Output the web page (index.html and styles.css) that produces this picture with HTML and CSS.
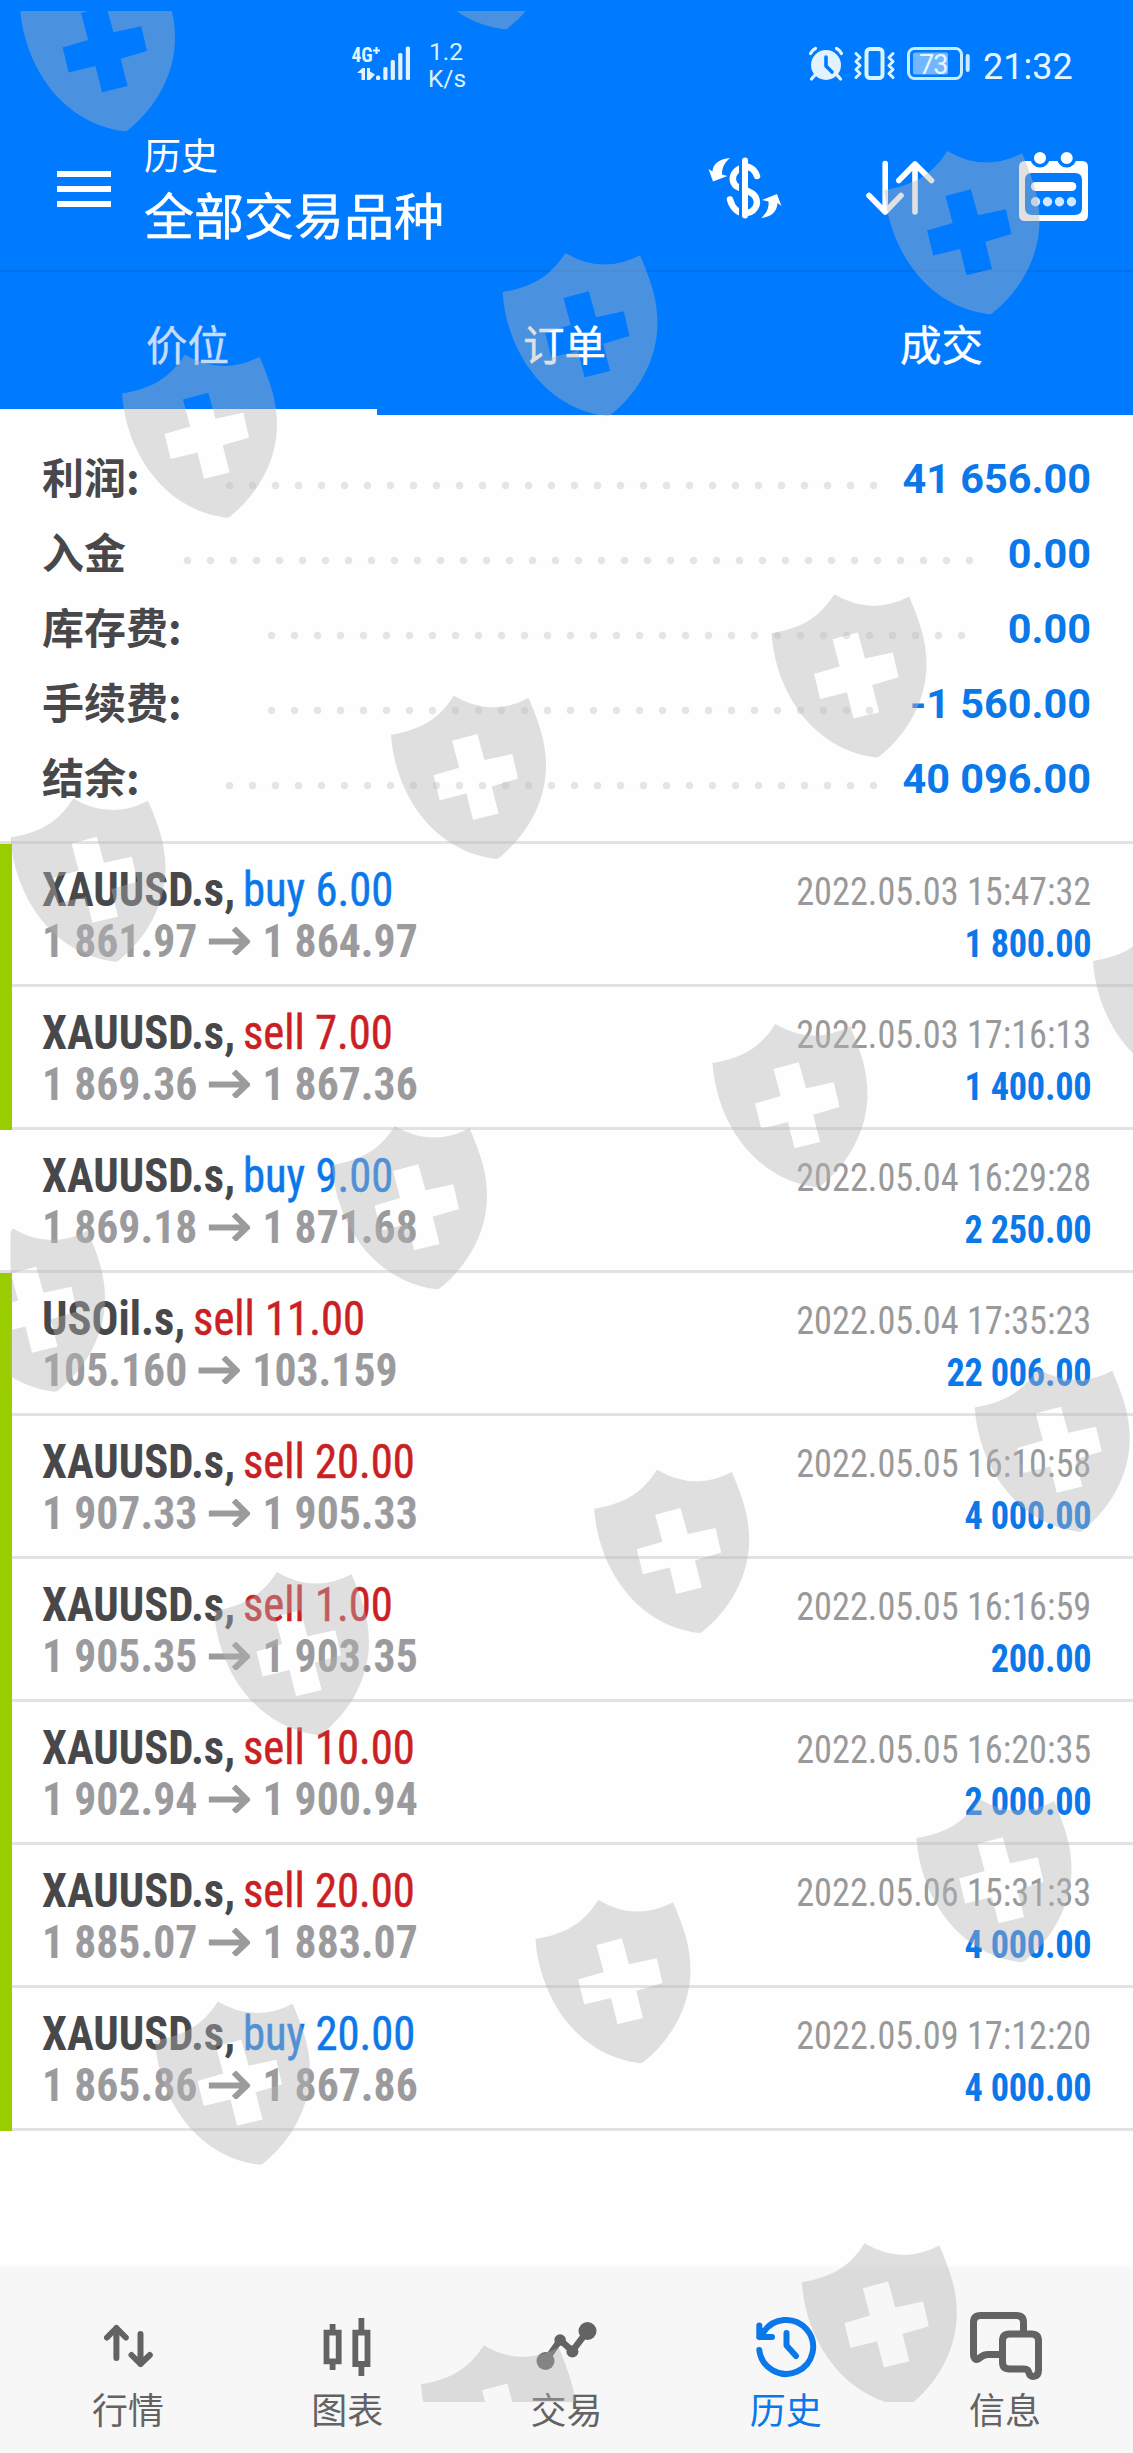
FILE: index.html
```
<!DOCTYPE html>
<html lang="zh-CN">
<head>
<meta charset="utf-8">
<title>历史</title>
<link rel="stylesheet" href="styles.css">
</head>
<body>
<svg class="defs" width="0" height="0">
  <symbol id="arrow" viewBox="0 0 42 28" preserveAspectRatio="none"><path d="M0 14.500H38M25.500 1.500L38.500 14.500L25.500 27" fill="none" stroke="currentColor" stroke-width="6"/></symbol>
</svg>
<header class="header">
  <div class="status">
    <svg class="signal" viewBox="350 45 62 37">
      <g fill="#e2f3ff">
        <text x="351.500" y="62" class="net">4G</text><path d="M373 50.500h7M376.500 47v7" stroke="#e2f3ff" stroke-width="2.200"/>
        <path d="M357 73l5.500-5h2.500v12h-3.500v-7zM367 68h3v3.500l5 3l-5 5.500h-3z"/>
        <rect x="376" y="75.500" width="4.200" height="4.500" rx="1.500"/><rect x="383.300" y="67" width="4.200" height="13" rx="1.500"/><rect x="390.700" y="60" width="4.200" height="20" rx="1.500"/><rect x="398.200" y="53" width="4.200" height="27" rx="1.500"/><rect x="405.800" y="46.500" width="4.200" height="33.500" rx="1.500"/>
      </g>
    </svg>
    <div class="rate"><span>1.2</span><span>K/s</span></div>
    <svg class="sys" viewBox="806 45 166 37">
      <circle cx="826" cy="65" r="15" fill="#e2f3ff"/>
      <path d="M826 57v9l6 6" fill="none" stroke="#007aff" stroke-width="3.600" stroke-linecap="round" stroke-linejoin="round"/>
      <path d="M810.500 53.500Q812 50 815.500 48.500M836.500 48.500Q840 50 841.500 53.500M815 75l-3.500 4M837 75l3.500 4" fill="none" stroke="#e2f3ff" stroke-width="3.200" stroke-linecap="round"/>
      <rect x="866.500" y="49" width="16" height="29" rx="3.500" fill="none" stroke="#d8f4ff" stroke-width="4"/>
      <path d="M856 53.500l4 4-4 4 4 4-4 4 4 4-4 4M893 53.500l-4 4 4 4-4 4 4 4-4 4 4 4" fill="none" stroke="#d8f4ff" stroke-width="3" stroke-linecap="round" stroke-linejoin="round"/>
      <rect x="908.500" y="48.500" width="53" height="30" rx="6" fill="none" stroke="#c4edff" stroke-width="3"/>
      <rect x="913" y="52.500" width="35" height="22" rx="2" fill="#72b6ff"/>
      <rect x="965.700" y="54" width="4" height="18" rx="2" fill="#c4edff"/>
      <text x="919" y="73.500" class="level">73</text>
    </svg>
    <span class="clock">21:32</span>
  </div>
  <div class="titlebar">
    <svg class="menu" viewBox="0 0 54 36"><path d="M0 3h54M0 18h54M0 33h54" stroke="#fff" stroke-width="6"/></svg>
    <div class="titles"><span class="sub">历史</span><span class="main">全部交易品种</span></div>
    <svg class="actions" viewBox="700 145 400 85">
      <path d="M757 176C754 167 746 165 741 168C732 172 731 180 735 185C738 189 752 190 755.500 197C759.500 205 754 213 745 213C737 213 732 207 730 199.500" fill="none" stroke="#fff" stroke-width="6.500" stroke-linecap="round"/>
      <path d="M741 160v56" stroke="#007aff" stroke-width="4"/>
      <path d="M745 160.500v55" stroke="#fff" stroke-width="6" stroke-linecap="round"/>
      <path d="M730 158C720 159 713 163 712.500 171.500L708.500 169L713 181.500L727.500 176L722 174.500C722 168 724 163 730 158z" fill="#fff"/>
      <path d="M761 218C771 217 777 212 777.500 203L781.500 206L777 194L762 200L768.500 201.500C769 208 767 213 761 218z" fill="#fff"/>
      <path d="M885.200 163.500V212M869 195.500L885.200 212L901 195.500M915 212V164M898.800 180.500L915 164L931.500 180.500" fill="none" stroke="#fff" stroke-width="5.600" stroke-linecap="round" stroke-linejoin="round"/>
      <path fill-rule="evenodd" fill="#fff" d="M1025 161H1082q6 0 6 6V215q0 6-6 6H1025q-6 0-6-6V167q0-6 6-6zM1032 173q-7 0-7 7V208q0 7 7 7H1075q7 0 7-7V180q0-7-7-7z"/>
      <circle cx="1040" cy="158" r="7.800" fill="#fff" stroke="#007aff" stroke-width="3.500"/>
      <circle cx="1066.700" cy="158" r="7.800" fill="#fff" stroke="#007aff" stroke-width="3.500"/>
      <rect x="1031" y="182" width="45.300" height="9" rx="4.500" fill="#fff"/>
      <g fill="#fff" fill-opacity=".82"><circle cx="1035.500" cy="201.700" r="4.700"/><circle cx="1047.500" cy="201.700" r="4.700"/><circle cx="1059.500" cy="201.700" r="4.700"/><circle cx="1071.500" cy="201.700" r="4.700"/></g>
    </svg>
  </div>
  <nav class="tabs"><span class="tab on">价位</span><span class="tab">订单</span><span class="tab">成交</span></nav>
</header>
<section class="summary">
  <div class="sum"><span class="label">利润:</span><i class="dots d29"></i><b>41 656.00</b></div>
  <div class="sum"><span class="label short">入金</span><i class="dots d35"></i><b>0.00</b></div>
  <div class="sum"><span class="label long">库存费:</span><i class="dots d31"></i><b>0.00</b></div>
  <div class="sum"><span class="label long">手续费:</span><i class="dots d27"></i><b>-1 560.00</b></div>
  <div class="sum"><span class="label">结余:</span><i class="dots d29"></i><b>40 096.00</b></div>
</section>
<main class="deals">
  <article class="deal mark"><div class="body"><div class="l"><p class="sym"><b>XAUUSD.s,</b><span class="buy">buy 6.00</span></p><p class="px">1 861.97<svg><use href="#arrow"/></svg>1 864.97</p></div><div class="r"><p class="date">2022.05.03 15:47:32</p><p class="val">1 800.00</p></div></div></article>
  <article class="deal mark"><div class="body"><div class="l"><p class="sym"><b>XAUUSD.s,</b><span class="sell">sell 7.00</span></p><p class="px">1 869.36<svg><use href="#arrow"/></svg>1 867.36</p></div><div class="r"><p class="date">2022.05.03 17:16:13</p><p class="val">1 400.00</p></div></div></article>
  <article class="deal"><div class="body"><div class="l"><p class="sym"><b>XAUUSD.s,</b><span class="buy">buy 9.00</span></p><p class="px">1 869.18<svg><use href="#arrow"/></svg>1 871.68</p></div><div class="r"><p class="date">2022.05.04 16:29:28</p><p class="val">2 250.00</p></div></div></article>
  <article class="deal mark"><div class="body"><div class="l"><p class="sym"><b>USOil.s,</b><span class="sell">sell 11.00</span></p><p class="px">105.160<svg><use href="#arrow"/></svg>103.159</p></div><div class="r"><p class="date">2022.05.04 17:35:23</p><p class="val">22 006.00</p></div></div></article>
  <article class="deal mark"><div class="body"><div class="l"><p class="sym"><b>XAUUSD.s,</b><span class="sell">sell 20.00</span></p><p class="px">1 907.33<svg><use href="#arrow"/></svg>1 905.33</p></div><div class="r"><p class="date">2022.05.05 16:10:58</p><p class="val">4 000.00</p></div></div></article>
  <article class="deal mark"><div class="body"><div class="l"><p class="sym"><b>XAUUSD.s,</b><span class="sell">sell 1.00</span></p><p class="px">1 905.35<svg><use href="#arrow"/></svg>1 903.35</p></div><div class="r"><p class="date">2022.05.05 16:16:59</p><p class="val">200.00</p></div></div></article>
  <article class="deal mark"><div class="body"><div class="l"><p class="sym"><b>XAUUSD.s,</b><span class="sell">sell 10.00</span></p><p class="px">1 902.94<svg><use href="#arrow"/></svg>1 900.94</p></div><div class="r"><p class="date">2022.05.05 16:20:35</p><p class="val">2 000.00</p></div></div></article>
  <article class="deal mark"><div class="body"><div class="l"><p class="sym"><b>XAUUSD.s,</b><span class="sell">sell 20.00</span></p><p class="px">1 885.07<svg><use href="#arrow"/></svg>1 883.07</p></div><div class="r"><p class="date">2022.05.06 15:31:33</p><p class="val">4 000.00</p></div></div></article>
  <article class="deal mark"><div class="body"><div class="l"><p class="sym"><b>XAUUSD.s,</b><span class="buy">buy 20.00</span></p><p class="px">1 865.86<svg><use href="#arrow"/></svg>1 867.86</p></div><div class="r"><p class="date">2022.05.09 17:12:20</p><p class="val">4 000.00</p></div></div></article>
</main>
<footer class="nav">
  <a class="item"><svg viewBox="92.500 2311 70 70"><path d="M115.900 2358V2328M106.500 2337.500L115.900 2328L125.300 2337.500M140 2334V2364M131 2355L140 2364L149.300 2355" stroke-width="6" stroke-linecap="round" stroke-linejoin="round"/></svg><span>行情</span></a>
  <a class="item"><svg viewBox="313 2311 70 70"><path d="M327.500 2332.700h12.200v28.600h-12.200zM333.600 2324v8M333.600 2362v8M356.300 2332.700h12.200v31.300h-12.200zM362.400 2318v14M362.400 2365v11" stroke-width="5.800"/></svg><span>图表</span></a>
  <a class="item"><svg viewBox="531.500 2311 70 70"><path d="M546 2361L560.600 2340L572.900 2351L588 2331" stroke-width="6.500"/><g fill="currentColor" stroke="none"><circle cx="546" cy="2361" r="9"/><circle cx="560.600" cy="2340" r="5.800"/><circle cx="572.900" cy="2351.500" r="6"/><circle cx="588" cy="2331" r="9"/></g></svg><span>交易</span></a>
  <a class="item on"><svg viewBox="750.500 2311 70 70"><path d="M758.800 2350A27 27 0 1 0 762.500 2333M758.800 2325.500V2337H771.500M758.800 2337L763 2331M786 2333V2345.500L795.500 2356" stroke-width="6" stroke-linecap="round" stroke-linejoin="round"/></svg><span>历史</span></a>
  <a class="item"><svg viewBox="969 2311 70 70" overflow="visible"><path d="M1022.500 2331V2322.500q0-7-7-7H979.500q-7 0-7 7V2354C972.500 2360 976.500 2360.500 978.500 2358C982 2355 984 2354.500 987 2354.500H1000M1008.500 2334H1030.500q7 0 7 7V2370C1037.500 2378 1029 2378 1028 2373C1027.500 2370 1026 2369 1023 2369H1008.500q-7 0-7-7V2341q0-7 7-7z" stroke-width="7"/></svg><span>信息</span></a>
</footer>
<svg class="watermark" viewBox="0 0 1133 2453">
  <defs>
    <clipPath id="area"><rect x="10.500" y="11" width="1122.500" height="2391"/></clipPath>
    <path id="shield" fill-rule="evenodd" d="M0 39C24 35 46 27 62.800 0Q100 22 137.600 2.300C148 27 155 46 155 70C155 105 137 139 107.500 162.500Q105.500 163.500 103 163C42 155 4 98 0 39zM61 45L68.200 72.100L42.600 79.600L48.700 104.600L75.500 97.900L82 124.300L107.600 117.900L100.700 90.700L127 82.900L121.300 58.200L93.500 64.300L86.300 38.200z"/>
  </defs>
  <g clip-path="url(#area)">
    <use href="#shield" x="20" y="-32"/><use href="#shield" x="400" y="-134"/>
    <use href="#shield" x="884.500" y="151"/><use href="#shield" x="502.500" y="253"/><use href="#shield" x="122" y="354.500"/>
    <use href="#shield" x="771.500" y="594.300"/><use href="#shield" x="391" y="695.700"/><use href="#shield" x="10.500" y="798.500"/>
    <use href="#shield" x="1093" y="922"/><use href="#shield" x="712.500" y="1024"/><use href="#shield" x="332" y="1126"/><use href="#shield" x="-50" y="1228.500"/>
    <use href="#shield" x="974.700" y="1368.500"/><use href="#shield" x="594.200" y="1469.700"/><use href="#shield" x="214" y="1572"/>
    <use href="#shield" x="916.500" y="1799"/><use href="#shield" x="535.500" y="1900"/><use href="#shield" x="155" y="2001.500"/>
    <use href="#shield" x="801.800" y="2243.300"/><use href="#shield" x="421" y="2345.300"/>
  </g>
</svg>
</body>
</html>
```
FILE: styles.css
```
* { box-sizing: border-box; margin: 0; padding: 0; }
body { position: relative; width: 1133px; height: 2453px; background: #fefefe; font-family: Roboto, "Noto Sans CJK SC", sans-serif; display: flex; flex-direction: column; overflow-x: hidden; }
svg { display: block; flex: none; }
.defs { position: absolute; }

/* header */
.header { height: 415px; background: #007aff; color: #fff; }
.status { display: flex; align-items: flex-start; height: 115px; padding: 45px 0 0 350px; }
.signal { width: 62px; height: 37px; }
.net { font: 700 19.5px "Roboto Condensed", sans-serif; }
.rate { display: flex; flex-direction: column; width: 60px; margin: -7px 0 0 16px; font-size: 24.500px; line-height: 27.4px; color: #d8f2ff; }
.rate span:first-child { padding-left: 1px; }
.sys { width: 166px; height: 37px; margin-left: 318px; }
.level { font: 400 27px Roboto, sans-serif; fill: #e6f6ff; letter-spacing: -1px; }
.clock { margin-left: 11px; font-size: 36px; line-height: 44px; color: #e6f6ff; }
.titlebar { display: flex; align-items: flex-start; height: 157px; padding-left: 57px; border-bottom: 2px solid #0071ec; }
.menu { width: 54px; height: 36px; margin-top: 56px; }
.titles { display: flex; flex-direction: column; width: 400px; margin: 13px 0 0 33px; font-family: "Noto Sans CJK SC", sans-serif; }
.sub { font-size: 37px; line-height: 52px; }
.main { font-size: 50px; line-height: 67px; -webkit-text-stroke: .5px; }
.actions { width: 400px; height: 85px; margin: 30px 0 0 156px; }
.tabs { display: grid; grid-template-columns: 377px 377px 377px; height: 143px; }
.tab { height: 143px; overflow: hidden; padding-right: 2px; font: 400 41.500px/143px "Noto Sans CJK SC", sans-serif; text-align: center; -webkit-text-stroke: .4px; }
.tab.on { color: #c7dcfa; border-bottom: 6px solid #fff; }

/* totals */
.summary { height: 429px; padding: 26px 42px 0; border-bottom: 3px solid #e2e2e2; }
.sum { display: flex; height: 75px; }
.label { flex: none; width: 175.800px; font: 700 42px/70px "Noto Sans CJK SC", sans-serif; color: #48484b; }
.label.short { width: 133.500px; }
.label.long { width: 218px; }
.sum b { margin-left: auto; white-space: nowrap; font-size: 41.400px; line-height: 76px; color: #0b78ea; }
.dots { flex: none; height: 75px; background: radial-gradient(circle, #e5e5e5 3.400px, transparent 4.200px) 0 40px / 23px 9px repeat-x; }
.d27 { width: 621px; }
.d29 { width: 667px; }
.d31 { width: 713px; }
.d35 { width: 805px; }
.d27, .d29, .d31, .d35 { margin-right: -60px; }

/* deals */
.deals { flex: 1; }
.deal { display: flex; height: 143px; }
.deal.mark::before { content: ""; width: 12px; background: #9acd00; }
.body { flex: 1; display: flex; justify-content: space-between; padding: 20px 42px 0; border-bottom: 3px solid #e2e2e2; }
.mark .body { padding-left: 30px; }
.l, .r { font-family: "Roboto Condensed", Roboto, sans-serif; white-space: nowrap; }
.l { transform: scaleX(.93); transform-origin: 0 0; }
.r { transform: scaleX(.93); transform-origin: 100% 0; text-align: right; }
.sym { display: flex; gap: 8.500px; font-size: 48px; line-height: 52px; color: #48484b; }
.buy { color: #0b78ea; }
.sell { color: #cb2023; }
.buy, .sell { -webkit-text-stroke: .5px; }
.px { display: flex; align-items: center; font-weight: 700; font-size: 47px; line-height: 50px; color: #9b9b9e; }
.px svg { width: 45px; height: 28px; margin: 0 13px 0 12px; }
.date { font-size: 39px; line-height: 57px; color: #999; }
.val { margin-top: 1px; font-size: 39px; font-weight: 700; line-height: 44px; letter-spacing: -.3px; color: #0b78ea; }

/* bottom navigation */
.nav { display: grid; grid-template-columns: repeat(5, 219.300px); justify-content: center; height: 189px; background: linear-gradient(#fefefe, #f7f7f7 5px); }
.item { display: flex; flex-direction: column; align-items: center; padding-top: 47px; color: #636365; }
.item svg { width: 70px; height: 70px; fill: none; stroke: currentColor; }
.item span { font: 400 36px/50px "Noto Sans CJK SC", sans-serif; margin-top: 2px; }
.item.on { color: #0b78ea; }

.watermark { position: absolute; left: 0; top: 0; width: 1133px; height: 2453px; fill: rgba(180, 180, 180, .41); pointer-events: none; }
```
